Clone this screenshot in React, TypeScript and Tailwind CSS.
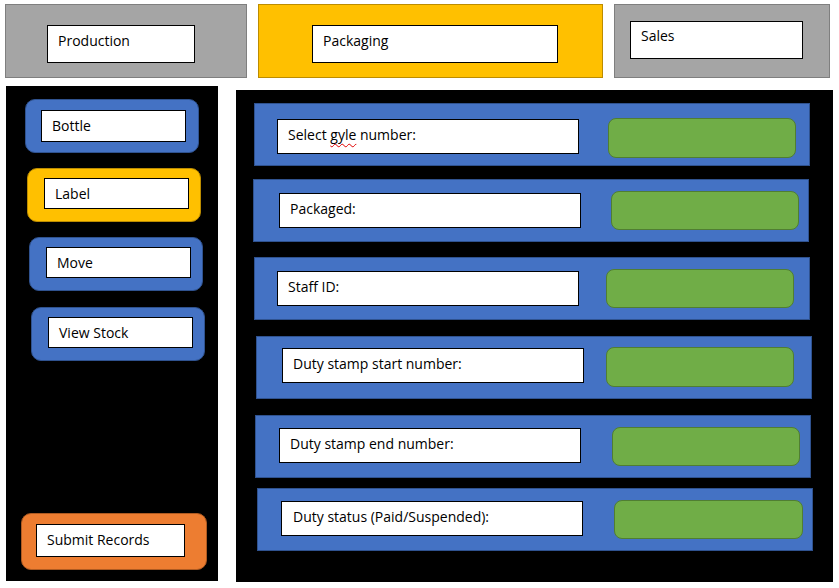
import React from "react";

const txt = "font-['Open_Sans',sans-serif] text-[14px] leading-[19px] text-black whitespace-nowrap";

type Side = { label: string; outer: string; inner: string };

const sideButtons: Side[] = [
  {
    label: "Bottle",
    outer: "ml-[19px] mt-[13px] w-[174px] h-[54px] rounded-[10px] bg-[#4472c4] border border-[#2f528f] pl-[15px] pt-[10px]",
    inner: "w-[145px] h-[32px] bg-white border border-black pl-[10px] pt-[5px]",
  },
  {
    label: "Label",
    outer: "ml-[21px] mt-[15px] w-[174px] h-[54px] rounded-[10px] bg-[#ffc000] border border-[#bc8c00] pl-[16px] pt-[9px]",
    inner: "w-[145px] h-[31px] bg-white border border-black pl-[10px] pt-[5px]",
  },
  {
    label: "Move",
    outer: "ml-[23px] mt-[15px] w-[174px] h-[54px] rounded-[10px] bg-[#4472c4] border border-[#2f528f] pl-[16px] pt-[9px]",
    inner: "w-[145px] h-[31px] bg-white border border-black pl-[10px] pt-[5px]",
  },
  {
    label: "View Stock",
    outer: "ml-[25px] mt-[16px] w-[174px] h-[54px] rounded-[10px] bg-[#4472c4] border border-[#2f528f] pl-[16px] pt-[9px]",
    inner: "w-[145px] h-[31px] bg-white border border-black pl-[10px] pt-[5px]",
  },
];

type Row = { label: React.ReactNode; row: string; box: string; green: string };

const rows: Row[] = [
  {
    label: (
      <>
        Select{" "}
        <span className="underline decoration-wavy decoration-[#e00000] decoration-1 underline-offset-[3px]">gyle</span>{" "}
        number:
      </>
    ),
    row: "ml-[18px] mt-[13px]",
    box: "ml-[22px] mt-[15px] w-[302px] h-[35px] pl-[10px]",
    green: "ml-[29px] mt-[14px] w-[188px] h-[40px]",
  },
  {
    label: "Packaged:",
    row: "ml-[17px] mt-[13px]",
    box: "ml-[25px] mt-[13px] w-[302px] h-[35px] pl-[10px]",
    green: "ml-[30px] mt-[11px] w-[188px] h-[39px]",
  },
  {
    label: "Staff ID:",
    row: "ml-[18px] mt-[15px]",
    box: "ml-[22px] mt-[13px] w-[302px] h-[35px] pl-[10px]",
    green: "ml-[27px] mt-[11px] w-[188px] h-[39px]",
  },
  {
    label: "Duty stamp start number:",
    row: "ml-[20px] mt-[16px]",
    box: "ml-[25px] mt-[11px] w-[302px] h-[35px] pl-[10px]",
    green: "ml-[22px] mt-[10px] w-[188px] h-[40px]",
  },
  {
    label: "Duty stamp end number:",
    row: "ml-[19px] mt-[16px]",
    box: "ml-[23px] mt-[12px] w-[302px] h-[35px] pl-[10px]",
    green: "ml-[31px] mt-[11px] w-[188px] h-[39px]",
  },
  {
    label: "Duty status (Paid/Suspended):",
    row: "ml-[21px] mt-[10px]",
    box: "ml-[23px] mt-[12px] w-[302px] h-[35px] pl-[11px]",
    green: "ml-[31px] mt-[11px] w-[189px] h-[39px]",
  },
];

export default function App() {
  return (
    <div className="w-[839px] h-[588px] bg-white overflow-hidden">
      {/* Top tabs */}
      <div className="flex items-start pl-[5px] pt-[4px]">
        <div className="w-[242px] h-[74px] bg-[#a5a5a5] border border-[#7f7f7f] pl-[41px] pt-[20px]">
          <div className={`w-[148px] h-[38px] bg-white border border-black pl-[10px] pt-[5px] ${txt}`}>Production</div>
        </div>
        <div className="ml-[11px] w-[345px] h-[74px] bg-[#ffc000] border border-[#bc8c00] pl-[53px] pt-[20px]">
          <div className={`w-[246px] h-[38px] bg-white border border-black pl-[10px] pt-[5px] ${txt}`}>Packaging</div>
        </div>
        <div className="ml-[11px] w-[216px] h-[74px] bg-[#a5a5a5] border border-[#7f7f7f] pl-[15px] pt-[16px]">
          <div className={`w-[173px] h-[38px] bg-white border border-black pl-[10px] pt-[4px] ${txt}`}>Sales</div>
        </div>
      </div>

      {/* Main area */}
      <div className="flex items-start mt-[8px]">
        <div className="ml-[6px] w-[212px] h-[495px] bg-black flex flex-col">
          {sideButtons.map((b) => (
            <div key={b.label} className={b.outer}>
              <div className={`${b.inner} ${txt}`}>{b.label}</div>
            </div>
          ))}
          <div className="mt-auto mb-[11px] ml-[15px] w-[186px] h-[57px] rounded-[10px] bg-[#ed7d31] border border-[#ae5a21] pl-[14px] pt-[10px]">
            <div className={`w-[149px] h-[33px] bg-white border border-black pl-[10px] pt-[5px] ${txt}`}>Submit Records</div>
          </div>
        </div>

        <div className="ml-[18px] mt-[4px] w-[597px] h-[492px] bg-black flex flex-col">
          {rows.map((r, i) => (
            <div
              key={i}
              className={`${r.row} w-[556px] h-[63px] bg-[#4472c4] border border-[#2f528f] flex items-start`}
            >
              <div className={`${r.box} bg-white border border-black pt-[5px] ${txt}`}>{r.label}</div>
              <div className={`${r.green} rounded-[8px] bg-[#70ad47] border border-[#507e32]`} />
            </div>
          ))}
        </div>
      </div>
    </div>
  );
}
